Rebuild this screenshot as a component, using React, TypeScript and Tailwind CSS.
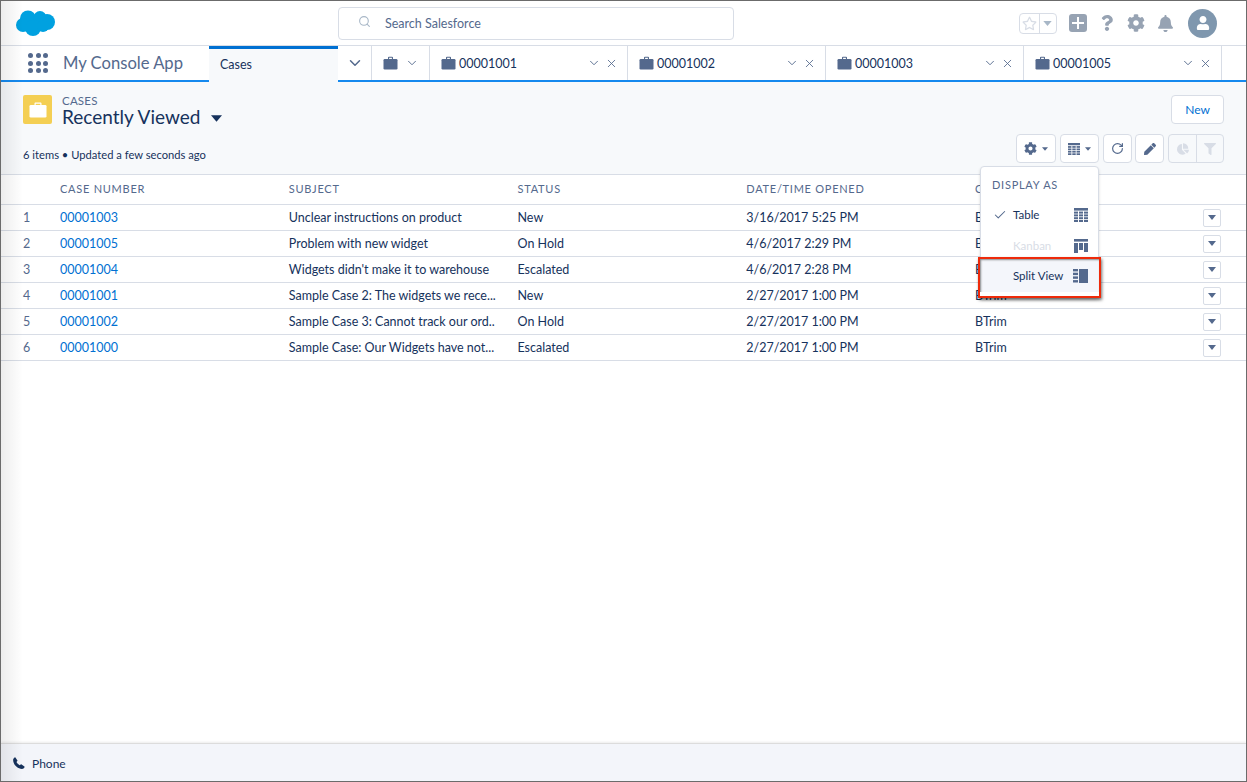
import { FaBell, FaChartPie, FaCog, FaFilter, FaPen, FaQuestion, FaRegStar, FaUser } from 'react-icons/fa';
import { ChevronDown, Check, RotateCw, Search, X } from 'lucide-react';

const cases = [
  { n: '00001003', subject: 'Unclear instructions on product', status: 'New', opened: '3/16/2017 5:25 PM', owner: 'BTrim' },
  { n: '00001005', subject: 'Problem with new widget', status: 'On Hold', opened: '4/6/2017 2:29 PM', owner: 'BTrim' },
  { n: '00001004', subject: "Widgets didn't make it to warehouse", status: 'Escalated', opened: '4/6/2017 2:28 PM', owner: 'BTrim' },
  { n: '00001001', subject: 'Sample Case 2: The widgets we rece...', status: 'New', opened: '2/27/2017 1:00 PM', owner: 'BTrim' },
  { n: '00001002', subject: 'Sample Case 3: Cannot track our ord..', status: 'On Hold', opened: '2/27/2017 1:00 PM', owner: 'BTrim' },
  { n: '00001000', subject: 'Sample Case: Our Widgets have not...', status: 'Escalated', opened: '2/27/2017 1:00 PM', owner: 'BTrim' },
];

const Cloud = () => (
  <svg width="41" height="29" viewBox="0 0 41 29">
    <g fill="#00a1e0">
      <circle cx="13" cy="9.5" r="8" />
      <circle cx="25" cy="8.5" r="6.5" />
      <circle cx="32" cy="13" r="8" />
      <circle cx="8" cy="16" r="7" />
      <circle cx="18" cy="19" r="8" />
      <circle cx="28" cy="17" r="6" />
    </g>
  </svg>
);

const Briefcase = ({ color = '#54698d', size = 15 }: { color?: string; size?: number }) => (
  <svg width={size} height={size} viewBox="0 0 15 15">
    <path d="M5 3V1.6C5 1 5.4.7 6 .7h3c.6 0 1 .3 1 .9V3H8.9V1.8H6.1V3z" fill={color} />
    <rect x="0.5" y="3" width="14" height="10.5" rx="1.2" fill={color} />
  </svg>
);

const GridIcon = ({ size = 14, color = '#54698d' }: { size?: number; color?: string }) => (
  <svg width={size} height={size} viewBox="0 0 14 14" fill={color}>
    <rect x="0" y="0" width="14" height="2.6" />
    {[3.6, 6.4, 9.2, 12].map((y) =>
      [0, 5, 10].map((x) => <rect key={`${x}-${y}`} x={x} y={y} width="4" height="2" />),
    )}
  </svg>
);

const KanbanIcon = () => (
  <svg width="14" height="14" viewBox="0 0 14 14" fill="#54698d">
    <rect x="0" y="0" width="14" height="2.6" />
    <rect x="0" y="4" width="4" height="10" />
    <rect x="5" y="4" width="4" height="7" />
    <rect x="10" y="4" width="4" height="9" />
  </svg>
);

const SplitIcon = () => (
  <svg width="15" height="14" viewBox="0 0 15 14" fill="#54698d">
    <rect x="6" y="0" width="9" height="14" />
    {[0, 3.7, 7.4, 11.1].map((y) => (
      <rect key={y} x="0" y={y} width="5" height="2.4" />
    ))}
  </svg>
);

const PhoneIcon = () => (
  <svg width="12" height="12" viewBox="0 0 12 12" fill="#16325c">
    <path d="M2.4.5 4.3 3.2c.2.3.2.6 0 .9l-.8 1c.6 1.3 1.8 2.5 3.2 3.2l1-.8c.3-.2.6-.2.9 0l2.8 1.9c.3.2.3.5.1.8-.5.9-1.4 1.7-2.5 1.7C4.5 11.9.1 7.5.1 3 .1 1.9.9 1 1.6.5c.3-.2.6-.2.8 0z" />
  </svg>
);

const Caret = ({ className }: { className: string }) => (
  <svg className={className} viewBox="0 0 10 6">
    <path d="M0 0h10L5 6z" fill="currentColor" />
  </svg>
);

const Tab = ({ label }: { label: string }) => (
  <div className="flex w-[198px] items-center border-r border-[#d8dde6] pl-[11px] pr-[9px]">
    <Briefcase />
    <span className="ml-[3px] pt-[2px] text-[12.5px] text-[#16325c]">{label}</span>
    <ChevronDown className="ml-auto h-[14px] w-[14px] text-[#54698d]" strokeWidth={1.6} />
    <X className="ml-[4px] h-[13px] w-[13px] text-[#54698d]" strokeWidth={1.6} />
  </div>
);

const ToolButton = ({ className, children }: { className: string; children: React.ReactNode }) => (
  <div className={`flex h-[29px] items-center justify-center rounded-[4px] border border-[#d8dde6] bg-white ${className}`}>
    {children}
  </div>
);

export default function App() {
  return (
    <div
      className="relative flex h-[782px] w-[1247px] flex-col overflow-hidden border border-[#6b6b6b] bg-white text-[#16325c]"
      style={{ fontFamily: 'Lato, "Open Sans", Arial, sans-serif' }}
    >
      {/* Global header */}
      <header className="relative flex h-[45px] shrink-0 items-center border-b border-[#d8dde6] bg-white">
        <div className="ml-[14px]">
          <Cloud />
        </div>
        <div className="absolute left-[337px] top-[6px] flex h-[33px] w-[396px] items-center rounded-[4px] border border-[#d8dde6] bg-white pl-[19px]">
          <Search className="mt-[-5px] h-[13px] w-[13px] text-[#a8b7c7]" strokeWidth={2} />
          <span className="ml-[14px] pt-[2px] text-[12.5px] text-[#54698d]">Search Salesforce</span>
        </div>
        <div className="ml-auto mr-[29px] flex items-center">
          <div className="flex h-[21px] w-[38px] items-center rounded-[4px] border border-[#d8dde6]">
            <div className="flex h-full w-[20px] items-center justify-center border-r border-[#d8dde6]">
              <FaRegStar className="h-[15px] w-[15px] text-[#d8dde6]" />
            </div>
            <Caret className="ml-[3px] h-[5px] w-[9px] text-[#a8b7c7]" />
          </div>
          <div className="ml-[12px] flex h-[18px] w-[18px] items-center justify-center rounded-[3px] bg-[#97a3b3]">
            <svg width="12" height="12" viewBox="0 0 12 12">
              <path d="M5 0h2v5h5v2H7v5H5V7H0V5h5z" fill="#fff" />
            </svg>
          </div>
          <FaQuestion className="ml-[14px] h-[18px] w-[12px] text-[#97a3b3]" />
          <FaCog className="ml-[14px] h-[18px] w-[18px] text-[#97a3b3]" />
          <FaBell className="ml-[12px] h-[17px] w-[17px] text-[#97a3b3]" />
          <div className="ml-[14px] flex h-[29px] w-[29px] items-center justify-center rounded-full bg-[#7f97ae]">
            <FaUser className="h-[14px] w-[14px] text-white" />
          </div>
        </div>
      </header>

      {/* Console tabs */}
      <nav className="flex h-[36px] shrink-0 border-b-2 border-[#1589ee] bg-white">
        <div className="flex w-[208px] items-center pl-[27px]">
          <div className="grid grid-cols-3 gap-[2.5px]">
            {Array.from({ length: 9 }).map((_, i) => (
              <span key={i} className="h-[5px] w-[5px] rounded-full bg-[#54698d]" />
            ))}
          </div>
          <span className="ml-[15px] text-[16.6px] text-[#54698d]">My Console App</span>
        </div>
        <div className="mb-[-2px] flex w-[129px] items-center border-t-[3px] border-[#0070d2] bg-[#f7f9fb] pb-[1px] pl-[11px] text-[12.5px] text-[#16325c]">
          Cases
        </div>
        <div className="flex w-[34px] items-center justify-center border-r border-[#d8dde6]">
          <ChevronDown className="h-[18px] w-[18px] text-[#54698d]" strokeWidth={2} />
        </div>
        <div className="flex w-[58px] items-center border-r border-[#d8dde6] pl-[11px]">
          <Briefcase />
          <ChevronDown className="ml-[7px] h-[14px] w-[14px] text-[#54698d]" strokeWidth={1.6} />
        </div>
        <Tab label="00001001" />
        <Tab label="00001002" />
        <Tab label="00001003" />
        <Tab label="00001005" />
      </nav>

      {/* List view header */}
      <section className="relative h-[93px] shrink-0 border-b border-[#d8dde6] bg-[#f7f9fb] pl-[22px] pr-[22px]">
        <div className="flex pt-[13px]">
          <div className="flex h-[29px] w-[29px] items-center justify-center rounded-[2px] bg-[#f4cf53]">
            <svg width="18" height="16" viewBox="0 0 18 16">
              <path d="M5.5 3V1.5C5.5.8 6 .5 6.6.5h4.8c.6 0 1.1.3 1.1 1V3h-1.2V1.7H6.7V3z" fill="#fff" />
              <rect x="0.5" y="3" width="17" height="12.5" rx="1.3" fill="#fff" />
            </svg>
          </div>
          <div className="ml-[10px] flex flex-col">
            <span className="text-[11.5px] leading-[12px] tracking-[0.2px] text-[#54698d]">CASES</span>
            <div className="flex items-center">
              <span className="text-[19px] leading-[19px]">Recently Viewed</span>
              <Caret className="ml-[11px] mt-[3px] h-[7px] w-[11px] text-[#16325c]" />
            </div>
          </div>
          <div className="ml-auto flex h-[29px] w-[53px] items-center justify-center rounded-[4px] border border-[#d8dde6] bg-white text-[12px] text-[#0070d2]">
            New
          </div>
        </div>
        <div className="mt-[8px] flex items-start">
          <span className="mt-[14px] text-[11.2px] leading-[14px] text-[#16325c]">6 items • Updated a few seconds ago</span>
          <div className="ml-auto flex">
            <ToolButton className="w-[40px] gap-[5px]">
              <FaCog className="h-[13px] w-[13px] text-[#54698d]" />
              <Caret className="h-[4px] w-[6px] text-[#54698d]" />
            </ToolButton>
            <ToolButton className="ml-[4px] w-[39px] gap-[5px]">
              <GridIcon size={12} />
              <Caret className="h-[4px] w-[6px] text-[#54698d]" />
            </ToolButton>
            <ToolButton className="ml-[4px] w-[29px]">
              <RotateCw className="h-[13px] w-[13px] text-[#54698d]" strokeWidth={2.2} />
            </ToolButton>
            <ToolButton className="ml-[3px] w-[29px]">
              <FaPen className="h-[12px] w-[12px] text-[#54698d]" />
            </ToolButton>
            <div className="ml-[4px] flex h-[29px] w-[56px] rounded-[4px] border border-[#d8dde6]">
              <div className="flex w-[28px] items-center justify-center border-r border-[#d8dde6]">
                <FaChartPie className="h-[12px] w-[12px] text-[#d8dde6]" />
              </div>
              <div className="flex flex-1 items-center justify-center">
                <FaFilter className="h-[12px] w-[12px] text-[#d8dde6]" />
              </div>
            </div>
          </div>
        </div>
      </section>

      {/* Table */}
      <main className="flex-1 bg-white text-[12.5px]">
        <div className="flex h-[30px] items-center border-b border-[#d8dde6] pb-[1px] text-[11px] tracking-[0.74px] text-[#54698d]">
          <div className="w-[59px]" />
          <div className="w-[228.75px]">CASE NUMBER</div>
          <div className="w-[228.75px]">SUBJECT</div>
          <div className="w-[228.75px]">STATUS</div>
          <div className="w-[228.75px]">DATE/TIME OPENED</div>
          <div>CASE OWNER</div>
        </div>
        {cases.map((c, i) => (
          <div key={c.n} className="flex h-[26px] items-center border-b border-[#d8dde6]">
            <div className="w-[59px] pl-[22px] pt-[2px] text-[#54698d]">{i + 1}</div>
            <div className="w-[228.75px] pt-[2px] text-[#0070d2]">{c.n}</div>
            <div className="w-[228.75px] pt-[2px]">{c.subject}</div>
            <div className="w-[228.75px] pt-[2px]">{c.status}</div>
            <div className="w-[228.75px] pt-[2px]">{c.opened}</div>
            <div className="w-[228px] pt-[2px]">{c.owner}</div>
            <div className="flex h-[18px] w-[18px] items-center justify-center rounded-[2px] border border-[#d8dde6] bg-white">
              <Caret className="h-[5px] w-[8px] text-[#54698d]" />
            </div>
          </div>
        ))}
      </main>

      {/* Utility bar */}
      <footer className="flex h-[38px] shrink-0 items-center border-t border-[#dcdcdc] bg-[#f3f5fa] pl-[12px] text-[12px] shadow-[0_-1px_2px_rgba(0,0,0,0.08)]">
        <PhoneIcon />
        <span className="ml-[7px] pt-[2px]">Phone</span>
      </footer>

      {/* Display-as menu */}
      <div className="absolute left-[979px] top-[165px] h-[132px] w-[119px] rounded-[4px] border border-[#d8dde6] bg-white shadow-[0_2px_3px_rgba(0,0,0,0.16)]">
        <div className="pl-[11px] pt-[11px] text-[11px] leading-[14px] tracking-[0.74px] text-[#54698d]">DISPLAY AS</div>
        <div className="mt-[15px] flex h-[16px] items-center pl-[12px] pr-[10px]">
          <Check className="h-[14px] w-[14px] text-[#54698d]" strokeWidth={1.8} />
          <span className="ml-[6px] text-[11.5px] text-[#16325c]">Table</span>
          <div className="ml-auto">
            <GridIcon />
          </div>
        </div>
        <div className="mt-[15px] flex h-[16px] items-center pl-[32px] pr-[10px]">
          <span className="text-[11.5px] text-[#d8dde6]">Kanban</span>
          <div className="ml-auto">
            <KanbanIcon />
          </div>
        </div>
      </div>

      {/* Red callout around the Split View item */}
      <div className="absolute left-[977px] top-[256px] h-[41px] w-[123px] border-[2.5px] border-[#ee2a0a] bg-[#f4f6fb] shadow-[inset_1px_1px_2px_rgba(0,0,0,0.45),1px_2px_3px_rgba(0,0,0,0.55)]">
        <div className="flex h-full items-center border-b-[4px] border-white pl-[33px] pr-[11px]">
          <span className="text-[11.5px] text-[#16325c]">Split View</span>
          <div className="ml-auto">
            <SplitIcon />
          </div>
        </div>
      </div>

      {/* Soft window edge shading */}
      <div className="pointer-events-none absolute inset-y-0 left-0 w-[22px] bg-gradient-to-r from-[#00000012] to-transparent" />
    </div>
  );
}
